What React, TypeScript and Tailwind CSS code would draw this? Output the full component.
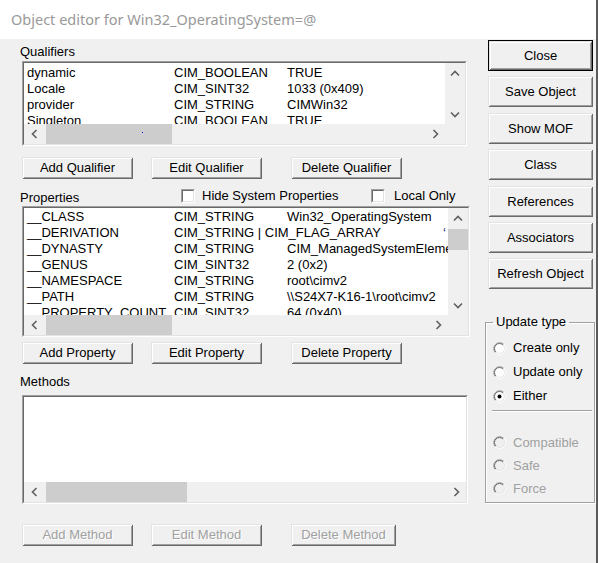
import React from "react";

const BTN_SHADOW =
  "shadow-[inset_1px_1px_0_#e3e3e3,inset_-1px_-1px_0_#696969,inset_2px_2px_0_#ffffff,inset_-2px_-2px_0_#a0a0a0]";

function Button({
  label,
  cls,
  disabled,
  def,
}: {
  label: string;
  cls: string;
  disabled?: boolean;
  def?: boolean;
}) {
  return (
    <div
      className={`${cls} shrink-0 flex items-center justify-center bg-[#f0f0f0] whitespace-nowrap ${
        def ? "border border-black" : ""
      } ${BTN_SHADOW} ${
        disabled ? "text-[#a0a0a0] [text-shadow:1px_1px_0_#ffffff]" : "text-black"
      }`}
    >
      {label}
    </div>
  );
}

function Chev({ dir }: { dir: "l" | "r" | "u" | "d" }) {
  if (dir === "l" || dir === "r") {
    return (
      <svg width="7" height="10" viewBox="0 0 7 10">
        <polyline
          points={dir === "l" ? "5.5,1 1.5,5 5.5,9" : "1.5,1 5.5,5 1.5,9"}
          fill="none"
          stroke="#606060"
          strokeWidth="1.6"
        />
      </svg>
    );
  }
  return (
    <svg width="10" height="7" viewBox="0 0 10 7">
      <polyline
        points={dir === "u" ? "1,5.5 5,1.5 9,5.5" : "1,1.5 5,5.5 9,1.5"}
        fill="none"
        stroke="#606060"
        strokeWidth="1.6"
      />
    </svg>
  );
}

function HScroll({
  thumbCls,
  corner,
  dot,
}: {
  thumbCls: string;
  corner?: boolean;
  dot?: boolean;
}) {
  return (
    <div className="h-[20px] shrink-0 flex bg-[#f0f0f0]">
      <div className="w-[21px] flex items-center justify-center">
        <Chev dir="l" />
      </div>
      <div className="flex-1 flex">
        <div className={`${thumbCls} ml-[1px] bg-[#cdcdcd] relative`}>
          {dot && <div className="absolute left-[96px] top-[8px] w-[1px] h-[1px] bg-[#0000ff]" />}
        </div>
      </div>
      <div className="w-[20px] flex items-center justify-center">
        <Chev dir="r" />
      </div>
      {corner && <div className="w-[20px] bg-[#f0f0f0]" />}
    </div>
  );
}

function VScroll({ thumb }: { thumb?: boolean }) {
  return (
    <div className="w-[20px] shrink-0 flex flex-col bg-[#f0f0f0]">
      <div className="h-[20px] flex items-center justify-center">
        <Chev dir="u" />
      </div>
      {thumb && <div className="mt-[1px] h-[21px] bg-[#cdcdcd]" />}
      <div className="flex-1" />
      <div className="h-[20px] flex items-center justify-center">
        <Chev dir="d" />
      </div>
    </div>
  );
}

function Sunken({ cls, children }: { cls: string; children?: React.ReactNode }) {
  return (
    <div
      className={`${cls} shrink-0 border border-t-[#a0a0a0] border-l-[#a0a0a0] border-r-white border-b-white`}
    >
      <div className="h-full border border-t-[#696969] border-l-[#696969] border-r-[#e3e3e3] border-b-[#e3e3e3] bg-white flex flex-col overflow-hidden">
        {children}
      </div>
    </div>
  );
}

function Check() {
  return (
    <div className="w-[14px] h-[14px] shrink-0 border border-t-[#a0a0a0] border-l-[#a0a0a0] border-r-white border-b-white">
      <div className="h-full border border-t-[#696969] border-l-[#696969] border-r-[#e3e3e3] border-b-[#e3e3e3] bg-white" />
    </div>
  );
}

function Radio({ checked, disabled }: { checked?: boolean; disabled?: boolean }) {
  return (
    <svg width="13" height="13" viewBox="0 0 13 13" className="shrink-0">
      <circle cx="6.5" cy="6.5" r="6" fill={disabled ? "#f0f0f0" : "#ffffff"} />
      <path d="M 2.26 10.74 A 6 6 0 0 1 10.74 2.26" fill="none" stroke="#a0a0a0" strokeWidth="1" />
      <path d="M 10.74 2.26 A 6 6 0 0 1 2.26 10.74" fill="none" stroke="#ffffff" strokeWidth="1" />
      <path d="M 2.96 10.04 A 5 5 0 0 1 10.04 2.96" fill="none" stroke="#696969" strokeWidth="1" />
      <path d="M 10.04 2.96 A 5 5 0 0 1 2.96 10.04" fill="none" stroke="#e3e3e3" strokeWidth="1" />
      {checked && <circle cx="6.5" cy="6.5" r="2" fill="#000000" />}
    </svg>
  );
}

type Row = { n: string; t: string; v: string; extra?: boolean };

function Rows({ rows, padTop }: { rows: Row[]; padTop: string }) {
  return (
    <div className={`flex-1 min-w-0 overflow-hidden ${padTop}`}>
      {rows.map((r, i) => (
        <div key={i} className="h-[16px] leading-[16px] flex whitespace-nowrap text-black">
          <div className="w-[150px] shrink-0 pl-[3px]">{r.n}</div>
          <div className="w-[113px] shrink-0">{r.t}</div>
          <div className="shrink-0">
            {r.extra ? <span className="ml-[156px] text-[#1a1a80]">‘</span> : r.v}
          </div>
        </div>
      ))}
    </div>
  );
}

const qualifiers: Row[] = [
  { n: "dynamic", t: "CIM_BOOLEAN", v: "TRUE" },
  { n: "Locale", t: "CIM_SINT32", v: "1033 (0x409)" },
  { n: "provider", t: "CIM_STRING", v: "CIMWin32" },
  { n: "Singleton", t: "CIM_BOOLEAN", v: "TRUE" },
];

const properties: Row[] = [
  { n: "__CLASS", t: "CIM_STRING", v: "Win32_OperatingSystem" },
  { n: "__DERIVATION", t: "CIM_STRING | CIM_FLAG_ARRAY", v: "", extra: true },
  { n: "__DYNASTY", t: "CIM_STRING", v: "CIM_ManagedSystemElement" },
  { n: "__GENUS", t: "CIM_SINT32", v: "2 (0x2)" },
  { n: "__NAMESPACE", t: "CIM_STRING", v: "root\\cimv2" },
  { n: "__PATH", t: "CIM_STRING", v: "\\\\S24X7-K16-1\\root\\cimv2" },
  { n: "__PROPERTY_COUNT", t: "CIM_SINT32", v: "64 (0x40)" },
];

export default function App() {
  return (
    <div className="w-[598px] h-[563px] flex bg-[#3a3a3a] overflow-hidden font-['Liberation_Sans',Arial,sans-serif] text-[13px]">
      <div className="w-[596px] h-full flex flex-col">
        {/* title bar */}
        <div className="h-[39px] shrink-0 bg-white flex items-center pl-[11px] font-['Noto_Sans',sans-serif] text-[14.5px] text-[#999999]">
          Object editor for Win32_OperatingSystem=@
        </div>

        {/* body */}
        <div className="flex-1 bg-[#f0f0f0] flex">
          {/* left column */}
          <div className="w-[470px] shrink-0 pl-[20px] pt-[5px] flex flex-col">
            <div className="h-[16px] leading-[16px]">Qualifiers</div>
            <Sunken cls="mt-[1px] ml-[2px] w-[445px] h-[85px]">
              <div className="flex-1 min-h-0 flex">
                <Rows rows={qualifiers} padTop="pt-[2px]" />
                <VScroll />
              </div>
              <HScroll thumbCls="w-[126px]" corner dot />
            </Sunken>

            <div className="mt-[11px] ml-[2px] flex">
              <Button label="Add Qualifier" cls="w-[111px] h-[22px]" />
              <Button label="Edit Qualifier" cls="ml-[18px] w-[111px] h-[22px]" />
              <Button label="Delete Qualifier" cls="ml-[29px] w-[111px] h-[22px]" />
            </div>

            <div className="h-[27px] flex">
              <div className="w-[161px] shrink-0 pt-[11px] leading-[16px]">Properties</div>
              <div className="w-[190px] shrink-0 pt-[9px]">
                <div className="h-[16px] flex items-center gap-[7px]">
                  <Check />
                  <span className="leading-[16px]">Hide System Properties</span>
                </div>
              </div>
              <div className="pt-[9px]">
                <div className="h-[16px] flex items-center gap-[9px]">
                  <Check />
                  <span className="leading-[16px]">Local Only</span>
                </div>
              </div>
            </div>

            <Sunken cls="ml-[2px] w-[448px] h-[131px]">
              <div className="flex-1 min-h-0 flex">
                <Rows rows={properties} padTop="pt-[1px]" />
                <VScroll thumb />
              </div>
              <HScroll thumbCls="w-[126px]" corner />
            </Sunken>

            <div className="mt-[5px] ml-[2px] flex">
              <Button label="Add Property" cls="w-[111px] h-[22px]" />
              <Button label="Edit Property" cls="ml-[18px] w-[111px] h-[22px]" />
              <Button label="Delete Property" cls="ml-[29px] w-[111px] h-[22px]" />
            </div>

            <div className="mt-[10px] h-[16px] leading-[16px]">Methods</div>
            <Sunken cls="mt-[5px] ml-[2px] w-[446px] h-[109px]">
              <div className="flex-1 min-h-0" />
              <HScroll thumbCls="w-[141px]" />
            </Sunken>

            <div className="mt-[20px] ml-[2px] flex">
              <Button label="Add Method" cls="w-[111px] h-[22px]" disabled />
              <Button label="Edit Method" cls="ml-[18px] w-[111px] h-[22px]" disabled />
              <Button label="Delete Method" cls="ml-[29px] w-[105px] h-[22px]" disabled />
            </div>
          </div>

          {/* right column */}
          <div className="flex-1 flex flex-col pt-[1px]">
            <div className="ml-[18px] flex flex-col">
              <Button label="Close" cls="w-[105px] h-[31px]" def />
              <Button label="Save Object" cls="mt-[5px] w-[105px] h-[31px]" />
              <Button label="Show MOF" cls="mt-[6px] w-[105px] h-[31px]" />
              <Button label="Class" cls="mt-[5px] w-[105px] h-[31px]" />
              <Button label="References" cls="mt-[6px] w-[105px] h-[31px]" />
              <Button label="Associators" cls="mt-[5px] w-[105px] h-[31px]" />
              <Button label="Refresh Object" cls="mt-[5px] w-[105px] h-[31px]" />
            </div>

            <fieldset className="mt-[25px] ml-[15px] w-[110px] border border-[#a0a0a0] shadow-[inset_1px_1px_0_#ffffff,1px_1px_0_#ffffff] pb-[2px]">
              <legend className="ml-[7px] px-[3px] leading-[16px]">Update type</legend>
              <div className="pt-[6px]">
                <div className="h-[24px] flex items-center pl-[7px] gap-[7px]">
                  <Radio />
                  <span>Create only</span>
                </div>
                <div className="h-[24px] flex items-center pl-[7px] gap-[7px]">
                  <Radio />
                  <span>Update only</span>
                </div>
                <div className="h-[24px] flex items-center pl-[7px] gap-[7px]">
                  <Radio checked />
                  <span>Either</span>
                </div>
              </div>
              <div className="mt-[2px] ml-[6px] w-[100px] border-t border-t-[#a0a0a0] border-b border-b-white" />
              <div className="mt-[19px] text-[#a0a0a0]">
                <div className="h-[23px] flex items-center pl-[7px] gap-[7px]">
                  <Radio disabled />
                  <span>Compatible</span>
                </div>
                <div className="h-[23px] flex items-center pl-[7px] gap-[7px]">
                  <Radio disabled />
                  <span>Safe</span>
                </div>
                <div className="h-[23px] flex items-center pl-[7px] gap-[7px]">
                  <Radio disabled />
                  <span>Force</span>
                </div>
              </div>
            </fieldset>
          </div>
        </div>
      </div>
      <div className="w-[2px] h-full bg-[#5a5a5a]" />
    </div>
  );
}
